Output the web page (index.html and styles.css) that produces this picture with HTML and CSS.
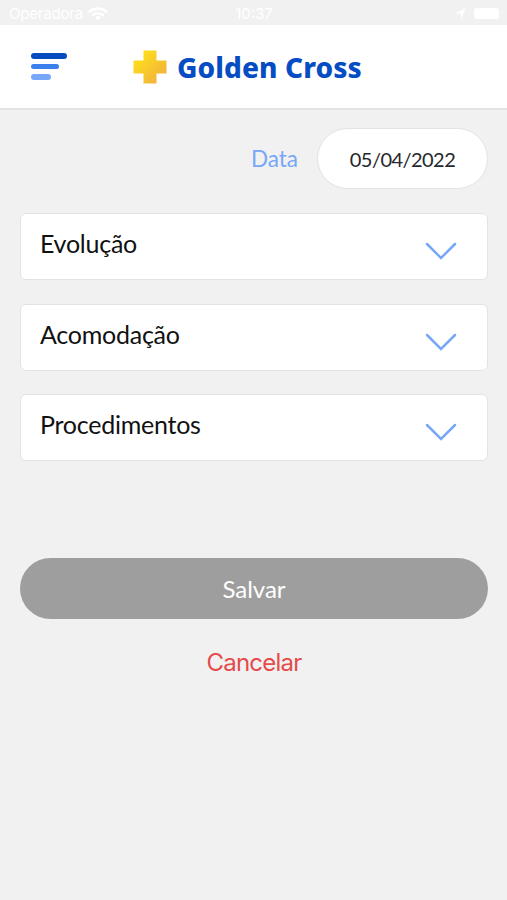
FILE: index.html
```
<!DOCTYPE html>
<html lang="pt-BR">
<head>
    <meta charset="UTF-8">
    <meta name="viewport" content="width=device-width, initial-scale=1.0">
    <title>Golden Cross</title>
    <link rel="stylesheet" href="styles.css">
</head>
<body>

    <div class="status-bar">
        <div class="status-left">
            <span class="carrier">Operadora</span>
            <svg width="20" height="14" viewBox="0 0 20 14" fill="none" stroke="#fff" stroke-width="2.6">
                <path d="M1 5.2C6 .4 14 .4 19 5.2"/>
                <path d="M4.2 8.6c3.4-3.2 8.2-3.2 11.6 0"/>
                <path d="M7 10.3c2-1.6 4-1.6 6 0l-3 3z" fill="#fff" stroke="none"/>
            </svg>
        </div>
        <span class="clock">10:37</span>
        <div class="status-right">
            <svg width="12" height="12" viewBox="0 0 12 12">
                <path d="M11.5.5 7 11.5V5.8L.8 5.2z" fill="#fff"/>
            </svg>
            <span class="battery"></span>
        </div>
    </div>

    <header class="header">
        <button class="menu-btn" aria-label="Menu">
            <span class="bar bar-1"></span>
            <span class="bar bar-2"></span>
            <span class="bar bar-3"></span>
        </button>
        <div class="logo">
            <svg width="34" height="34" viewBox="0 0 34 34">
                <defs>
                    <linearGradient id="gold" x1="0" y1="0" x2="1" y2="1">
                        <stop offset="0.2" stop-color="#fddc1c"/>
                        <stop offset="0.8" stop-color="#f3b63a"/>
                    </linearGradient>
                </defs>
                <path d="M10.500.5h13v10h10v13h-10v10h-13v-10H.5v-13h10z" fill="url(#gold)"/>
            </svg>
            <span class="logo-name">Golden Cross</span>
        </div>
    </header>

    <main class="content">
        <div class="date-row">
            <span class="date-label">Data</span>
            <button class="date-value">05/04/2022</button>
        </div>

        <div class="card">
            <span>Evolução</span>
            <svg class="chevron" width="32" height="18" viewBox="0 0 32 18"><path d="M2 2l14 14L30 2"/></svg>
        </div>
        <div class="card">
            <span>Acomodação</span>
            <svg class="chevron" width="32" height="18" viewBox="0 0 32 18"><path d="M2 2l14 14L30 2"/></svg>
        </div>
        <div class="card">
            <span>Procedimentos</span>
            <svg class="chevron" width="32" height="18" viewBox="0 0 32 18"><path d="M2 2l14 14L30 2"/></svg>
        </div>

        <button class="save-btn">Salvar</button>
        <button class="cancel-btn">Cancelar</button>
    </main>

</body>
</html>
```
FILE: styles.css
```
:root {
    --background-color: #f1f1f1;
    --border-color: #e3e3e3;
    --blue-dark: #0a4bbf;
    --blue: #3a7fee;
    --blue-light: #77a8f8;
    --red: #e54b4b;
}

* {
    box-sizing: border-box;
}

body {
    margin: 0;
    min-height: 100vh;
    font-family: Lato, sans-serif;
    background-color: var(--background-color);
    color: #111;
}

button {
    display: block;
    padding: 0;
    border: none;
    background: none;
    font-family: inherit;
    cursor: pointer;
}

/* status bar */
.status-bar {
    display: grid;
    grid-template-columns: 1fr auto 1fr;
    align-items: center;
    height: 25px;
    padding: 2px 8px 0 9px;
    font-family: Inter, sans-serif;
    font-size: 15px;
    color: #fff;
}

.status-left, .status-right {
    display: flex;
    align-items: center;
    gap: 5px;
}

.carrier {
    letter-spacing: -0.2px;
}

.status-right {
    justify-content: flex-end;
    gap: 8px;
}

.battery {
    width: 25px;
    height: 11px;
    border-radius: 3px;
    background-color: #fff;
}

/* header */
.header {
    display: flex;
    align-items: center;
    height: 85px;
    padding: 0 31px;
    background-color: #fff;
    border-bottom: 2px solid var(--border-color);
}

.menu-btn {
    display: flex;
    flex-direction: column;
    gap: 5px;
    width: 36px;
}

.bar {
    height: 5.5px;
    border-radius: 3px;
}

.bar-1 {
    width: 36px;
    background-color: var(--blue-dark);
}

.bar-2 {
    width: 28px;
    background-color: var(--blue);
}

.bar-3 {
    width: 20px;
    background-color: var(--blue-light);
}

.logo {
    display: flex;
    align-items: center;
    gap: 10px;
    margin-left: 66px;
}

.logo-name {
    font-family: "Noto Sans", sans-serif;
    font-size: 28px;
    font-weight: 800;
    line-height: 34px;
    letter-spacing: 0.1px;
    white-space: nowrap;
    color: #064dc4;
}

/* form */
.content {
    padding: 18px 19px 0 20px;
}

.date-row {
    display: flex;
    justify-content: flex-end;
    align-items: center;
    gap: 19px;
    margin-bottom: 24px;
}

.date-label {
    font-size: 22.5px;
    color: var(--blue-light);
}

.date-value {
    width: 171px;
    height: 61px;
    border: 1px solid var(--border-color);
    border-radius: 31px;
    background-color: #fff;
    font-size: 20px;
    letter-spacing: -0.55px;
    color: #25282d;
}

.card {
    display: flex;
    justify-content: space-between;
    height: 67px;
    margin-bottom: 23.5px;
    padding: 14px 30px 0 19px;
    border: 1.5px solid var(--border-color);
    border-radius: 6px;
    background-color: #fff;
    font-size: 25px;
    line-height: 30px;
    letter-spacing: -0.25px;
}

.chevron {
    margin-top: 14px;
    fill: none;
    stroke: var(--blue-light);
    stroke-width: 2.5;
    stroke-linecap: round;
}

.save-btn {
    width: 100%;
    height: 61px;
    margin-top: 97px;
    border-radius: 31px;
    background-color: #9e9e9e;
    font-size: 24px;
    color: #fff;
}

.cancel-btn {
    margin: 28px auto 0;
    font-family: Inter, sans-serif;
    font-size: 24px;
    line-height: 32px;
    letter-spacing: -0.8px;
    color: var(--red);
}
```
